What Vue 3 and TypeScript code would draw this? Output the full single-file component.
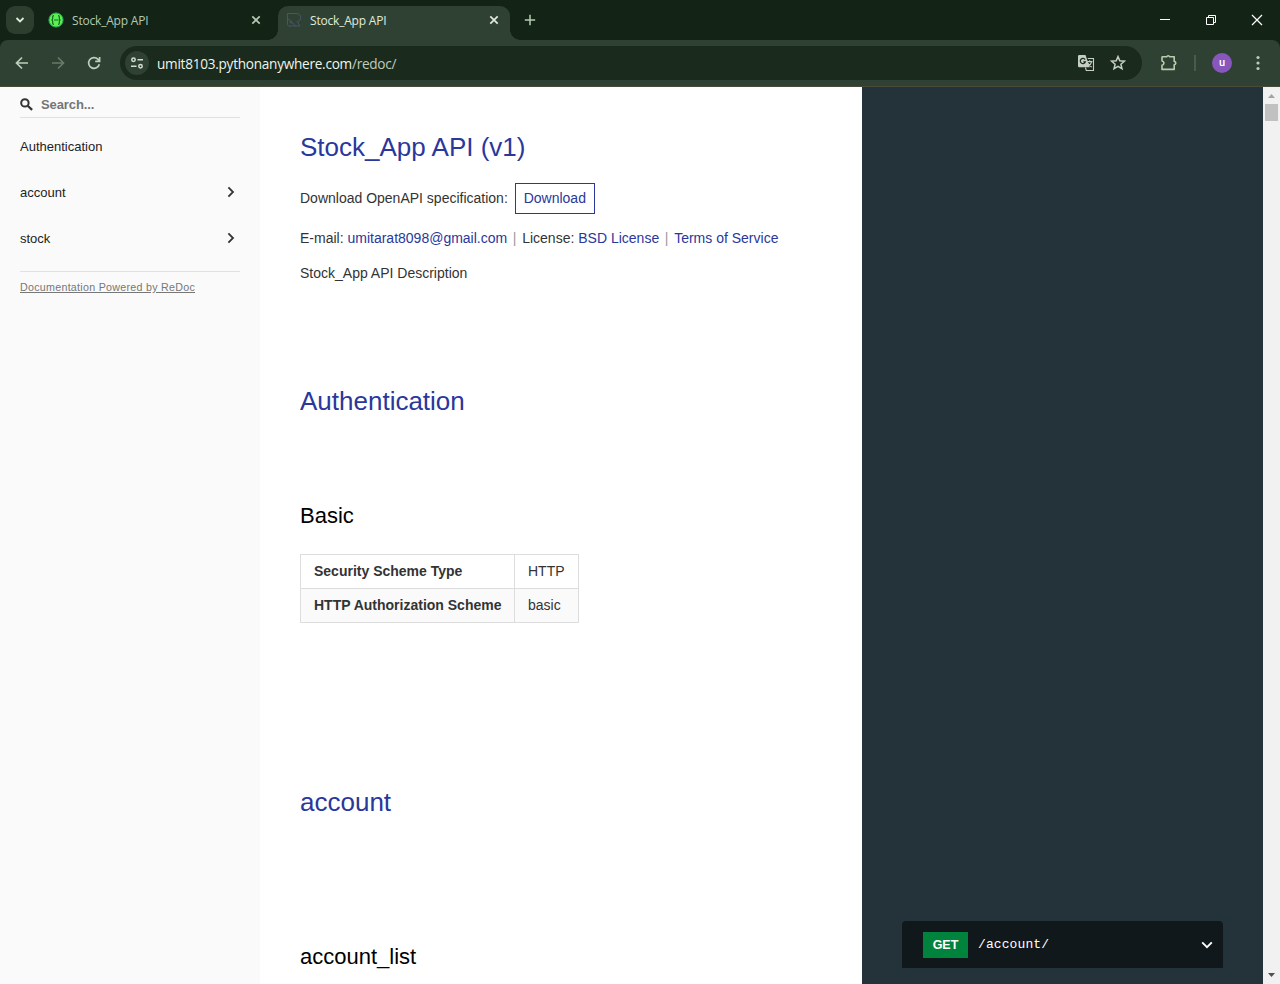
<script setup lang="ts">
interface Tab { title: string; active: boolean }
const tabs: Tab[] = [
  { title: 'Stock_App API', active: false },
  { title: 'Stock_App API', active: true },
]
const groups: string[] = ['account', 'stock']
const scheme: { name: string; value: string }[] = [
  { name: 'Security Scheme Type', value: 'HTTP' },
  { name: 'HTTP Authorization Scheme', value: 'basic' },
]
</script>

<template>
  <div class="window">
    <header class="tabstrip">
      <button class="tab-search" aria-label="Search tabs">
        <svg width="10" height="8" viewBox="0 0 10 8"><path d="M1.5 2 5 5.5 8.5 2" fill="none" stroke="#dfe9dc" stroke-width="1.8" /></svg>
      </button>
      <div v-for="(tab, i) in tabs" :key="i" class="tab" :class="{ active: tab.active }">
        <svg v-if="!tab.active" class="favicon" width="16" height="16" viewBox="0 0 16 16">
          <circle cx="8" cy="8" r="7.1" fill="#5cf04f" stroke="#20a654" />
          <path d="M5.9 3.6C4.5 3.6 4.7 5 4.7 6.3 4.7 7.3 4.3 8 3.4 8c.9 0 1.3.7 1.3 1.7 0 1.3-.2 2.7 1.2 2.7M10.1 3.6c1.4 0 1.2 1.4 1.2 2.7 0 1 .4 1.7 1.3 1.7-.9 0-1.3.7-1.3 1.7 0 1.3.2 2.7-1.2 2.7M6 8h4.5" fill="none" stroke="#176628" stroke-width="1.2" />
        </svg>
        <svg v-else class="favicon" width="16" height="16" viewBox="0 0 16 16" fill="none" stroke="#46576a">
          <path d="M1.5 1.5H10c3.2 0 4.7 1.8 4.7 4 0 2.1-1.5 3.8-3.5 4L14 14H9.8L1.5 6.2zM1.5 6.2v6.3c0 .9.6 1.5 1.5 1.5h6.8M3.5 10.8h3M3.5 9h2" />
        </svg>
        <span class="tab-title">{{ tab.title }}</span>
        <svg class="close" width="10" height="10" viewBox="0 0 10 10"><path d="m1.3 1.3 7.4 7.4m0-7.4L1.3 8.7" stroke="currentColor" stroke-width="1.7" /></svg>
      </div>
      <svg class="plus" width="12" height="12" viewBox="0 0 12 12"><path d="M6 .8v10.4M.8 6h10.4" stroke="#b4ccb1" stroke-width="1.5" /></svg>
      <div class="controls">
        <svg width="12" height="12" viewBox="0 0 12 12"><path d="M1 5.5h10" stroke="#fff" /></svg>
        <svg width="12" height="12" viewBox="0 0 12 12" fill="none" stroke="#fff"><path d="M1.5 3.5h7v7h-7zM3.5 3.5v-2h7v7h-2" /></svg>
        <svg width="12" height="12" viewBox="0 0 12 12"><path d="m1 1 10 10m0-10L1 11" stroke="#fff" stroke-width="1.2" /></svg>
      </div>
    </header>

    <div class="toolbar">
      <svg class="nav" width="16" height="16" viewBox="0 0 16 16" fill="none" stroke="#bdcfba" stroke-width="1.7"><path d="M14 8H3M8 2.5 2.5 8 8 13.5" /></svg>
      <svg class="nav" width="16" height="16" viewBox="0 0 16 16" fill="none" stroke="#687a68" stroke-width="1.7"><path d="M2 8h11M8 2.5 13.5 8 8 13.5" /></svg>
      <svg class="nav" width="16" height="16" viewBox="0 0 16 16" fill="none" stroke="#bdcfba" stroke-width="1.7"><path d="M13.3 9.2A5.4 5.4 0 1 1 12 4.3L13.4 6M13.6 2v4.4H9.2" /></svg>
      <div class="omnibox">
        <span class="site">
          <svg width="14" height="12" viewBox="0 0 14 12" fill="none" stroke="#d3ddd1" stroke-width="1.5"><circle cx="3.5" cy="2.8" r="1.7" /><path d="M7.5 2.8H13M1 9.2h5.5" /><circle cx="10.5" cy="9.2" r="1.7" /></svg>
        </span>
        <span class="url">umit8103.pythonanywhere.com<span class="path">/redoc/</span></span>
        <svg class="translate" width="18" height="18" viewBox="0 0 18 18">
          <path d="M2.3 1h6.2l4.2 12.3H2.3A1.3 1.3 0 0 1 1 12V2.3A1.3 1.3 0 0 1 2.3 1z" fill="#c4cec2" />
          <path d="M8.1 5.6A2.6 2.6 0 1 0 8.4 7.8H6.3" fill="none" stroke="#1a2a1d" stroke-width="1.2" />
          <path d="M10.8 4.5h5.7v12H9.3l-.9-3M10.2 7.6h5.2M12.7 6.2v1.4m2 0c-.5 2.2-1.8 3.8-3.9 5m.1-3.3c.8 1.5 2.2 2.8 3.9 3.8" fill="none" stroke="#c4cec2" stroke-width="1.1" />
        </svg>
        <svg width="16" height="16" viewBox="0 0 16 16"><path d="m8 1.6 1.8 4.2 4.6.4-3.5 3 1.1 4.5L8 11.3l-4 2.4 1.1-4.5-3.5-3 4.6-.4z" fill="none" stroke="#c4cec2" stroke-width="1.5" /></svg>
      </div>
      <svg class="puzzle" width="18" height="18" viewBox="0 0 18 18"><path d="M2.6 2.8h4.1a1.6 1.6 0 0 1 3 0h4.5v4.7a1.6 1.6 0 0 1 0 3.2v4.7H2v-4.2c2.6-.4 2.6-3.8 0-4.2V3.4c0-.4.2-.6.6-.6z" fill="none" stroke="#b5ceb0" stroke-width="1.6" stroke-linejoin="round" /></svg>
      <span class="divider"></span>
      <span class="avatar">u</span>
      <svg width="4" height="16" viewBox="0 0 4 16" fill="#b9cdb6"><circle cx="2" cy="2.5" r="1.6" /><circle cx="2" cy="8" r="1.6" /><circle cx="2" cy="13.5" r="1.6" /></svg>
    </div>

    <div class="page">
      <nav class="sidebar">
        <div class="search">
          <svg width="13" height="13" viewBox="0 0 13 13" fill="none" stroke="#333"><circle cx="4.9" cy="4.9" r="3.7" stroke-width="2" /><path d="m7.7 7.7 4.4 4.2" stroke-width="2.2" /></svg>
          <span>Search...</span>
        </div>
        <div class="item">Authentication</div>
        <div v-for="g in groups" :key="g" class="item">
          <span>{{ g }}</span>
          <svg width="8" height="12" viewBox="0 0 8 12"><path d="M1.4 1.4 6 6l-4.6 4.6" fill="none" stroke="#333" stroke-width="1.8" /></svg>
        </div>
        <div class="powered"><a>Documentation Powered by ReDoc</a></div>
      </nav>

      <main class="content">
        <h1 class="title">Stock_App API (v1)</h1>
        <div class="download"><span>Download OpenAPI specification:</span><a class="button">Download</a></div>
        <div class="info">
          <span>E-mail: <a>umitarat8098@gmail.com</a></span><i>|</i>
          <span>License: <a>BSD License</a></span><i>|</i>
          <a>Terms of Service</a>
        </div>
        <p class="description">Stock_App API Description</p>
        <h1 class="auth">Authentication</h1>
        <h2 class="basic">Basic</h2>
        <table>
          <tbody>
            <tr v-for="row in scheme" :key="row.name"><th>{{ row.name }}</th><td>{{ row.value }}</td></tr>
          </tbody>
        </table>
        <h1 class="account">account</h1>
        <h2 class="list">account_list</h2>
      </main>

      <aside class="samples">
        <div class="endpoint">
          <span class="verb">GET</span>
          <span class="route">/account/</span>
          <svg width="12" height="8" viewBox="0 0 12 8"><path d="M1.2 1.3 6 6.1l4.8-4.8" fill="none" stroke="#fff" stroke-width="1.9" /></svg>
        </div>
      </aside>

      <div class="scrollbar">
        <svg width="7" height="4" viewBox="0 0 7 4"><path d="M0 4 3.5 0 7 4z" fill="#a3a3a3" /></svg>
        <span class="thumb"></span>
        <svg class="down" width="7" height="4" viewBox="0 0 7 4"><path d="M0 0h7L3.5 4z" fill="#505050" /></svg>
      </div>
    </div>
  </div>
</template>

<style>
body { margin: 0; overflow: hidden; }
</style>

<style scoped>
* { box-sizing: border-box; }
svg { display: block; flex: none; }
.window { width: 1280px; height: 984px; display: flex; flex-direction: column; overflow: hidden; background: #132315; font-family: "Liberation Sans", Arial, sans-serif; }
.tabstrip { height: 40px; display: flex; align-items: center; padding-left: 6px; flex: none; }
.tab-search { width: 28px; height: 28px; padding: 0; border: 0; border-radius: 9px; background: #2d3e2f; display: flex; align-items: center; justify-content: center; }
.tab { height: 34px; width: 232px; margin-top: 6px; display: flex; align-items: center; padding: 0 12px 6px 8px; color: #b4c9b2; font: 12px "Open Sans", "Noto Sans", sans-serif; position: relative; }
.tab:not(.active) { margin-left: 6px; }
.tab.active { margin-left: 6px; background: #2f4132; border-radius: 10px 10px 0 0; color: #e0ebdd; }
.tab.active::before, .tab.active::after { content: ""; position: absolute; bottom: 0; width: 10px; height: 10px; }
.tab.active::before { left: -10px; background: radial-gradient(circle at 0 0, transparent 9.5px, #2f4132 10px); }
.tab.active::after { right: -10px; background: radial-gradient(circle at 100% 0, transparent 9.5px, #2f4132 10px); }
.tab-title { margin-left: 8px; flex: 1; letter-spacing: -0.2px; white-space: nowrap; }
.tab .close { margin-right: -1px; }
.plus { margin-left: 14px; }
.controls { margin-left: auto; margin-right: 17px; display: flex; gap: 34px; }
.toolbar { height: 47px; flex: none; display: flex; align-items: center; padding: 0 20px 0 14px; background: #2f4132; border-bottom: 1px solid #484b3c; border-radius: 8px 8px 0 0; }
.nav { margin-right: 20px; }
.omnibox { width: 1022px; height: 34px; margin-left: -2px; border-radius: 17px; background: #1a2a1d; display: flex; align-items: center; padding: 0 15px 0 5px; }
.site { width: 24px; height: 24px; border-radius: 50%; background: #2f4132; display: flex; align-items: center; justify-content: center; }
.url { margin-left: 8px; flex: 1; color: #eef5ec; font: 13.6px "Open Sans", "Noto Sans", sans-serif; letter-spacing: -0.26px; }
.path { color: #bfcbbd; }
.translate { margin-right: 15px; }
.omnibox > svg:last-child { margin-right: 1px; }
.puzzle { margin-left: 18px; }
.divider { width: 2px; height: 16px; margin-left: 16px; background: #475d47; }
.avatar { width: 20px; height: 20px; margin: 0 24px 0 16px; border-radius: 50%; background: #8757bd; color: #fff; font: 500 11px/19px Roboto, sans-serif; text-align: center; }
.page { height: 897px; display: flex; }
.sidebar { width: 260px; padding: 8px 20px; background: #fafafa; color: #333; font-size: 13px; }
.search { height: 23px; border-bottom: 1px solid #e1e1e1; display: flex; align-items: center; padding-bottom: 4px; gap: 8px; font-weight: bold; letter-spacing: -0.1px; color: #757575; margin-bottom: 5px; }
.item { height: 46px; display: flex; align-items: center; justify-content: space-between; padding-right: 5px; color: #222; }
.powered { margin-top: 10px; border-top: 1px solid #e1e1e1; height: 32px; line-height: 31px; font-size: 10.7px; letter-spacing: 0.27px; }
.content { width: 602px; padding: 39px 40px 0; background: #fff; color: #333; font-size: 14px; }
h1, h2 { margin: 0; font-weight: 400; }
h1 { height: 42px; line-height: 42px; font-size: 26px; color: #2a379c; }
h2 { height: 36px; line-height: 36px; font-size: 22px; color: #000; }
a { color: #2a379c; }
.powered a { color: #777; text-decoration: underline; }
.download { height: 31px; margin-top: 15px; display: flex; align-items: center; }
.download span { padding-bottom: 2px; }
.button { width: 80px; height: 31px; margin-left: 7px; border: 1px solid #2a379c; line-height: 29px; text-align: center; }
.info { height: 24px; margin-top: 12px; line-height: 24px; display: flex; white-space: pre-wrap; }
.info i { width: 15px; text-align: center; color: #999; font-style: normal; }
.description { margin: 11px 0 0; height: 24px; line-height: 24px; }
.auth { margin-top: 95px; }
.basic { margin-top: 76px; }
table { margin-top: 20px; width: 279px; height: 69px; border-collapse: collapse; table-layout: fixed; }
th, td { height: 34px; border: 1px solid #ddd; padding: 0 13px 2px; text-align: left; font-size: 14px; white-space: nowrap; }
th { width: 214px; }
tr:nth-child(2) { background: #fafafa; }
.account { margin-top: 158px; }
.list { margin-top: 116px; }
.samples { width: 401px; background: #243239; padding: 0 40px 16px; display: flex; align-items: flex-end; }
.endpoint { width: 321px; height: 47px; padding: 0 10px 0 21px; background: #10181b; border-radius: 4px 4px 0 0; color: #fff; display: flex; align-items: center; }
.verb { width: 45px; height: 26px; background: #00833d; font: bold 12.5px/26px "Liberation Sans", sans-serif; text-align: center; }
.route { margin-left: 10px; flex: 1; font: 13px "Liberation Mono", monospace; letter-spacing: 0.1px; }
.scrollbar { width: 17px; background: #f1f1f1; display: flex; flex-direction: column; align-items: center; padding: 7px 0; }
.thumb { width: 13px; height: 17px; margin-top: 6px; background: #c1c1c1; }
.down { margin-top: auto; }
</style>
